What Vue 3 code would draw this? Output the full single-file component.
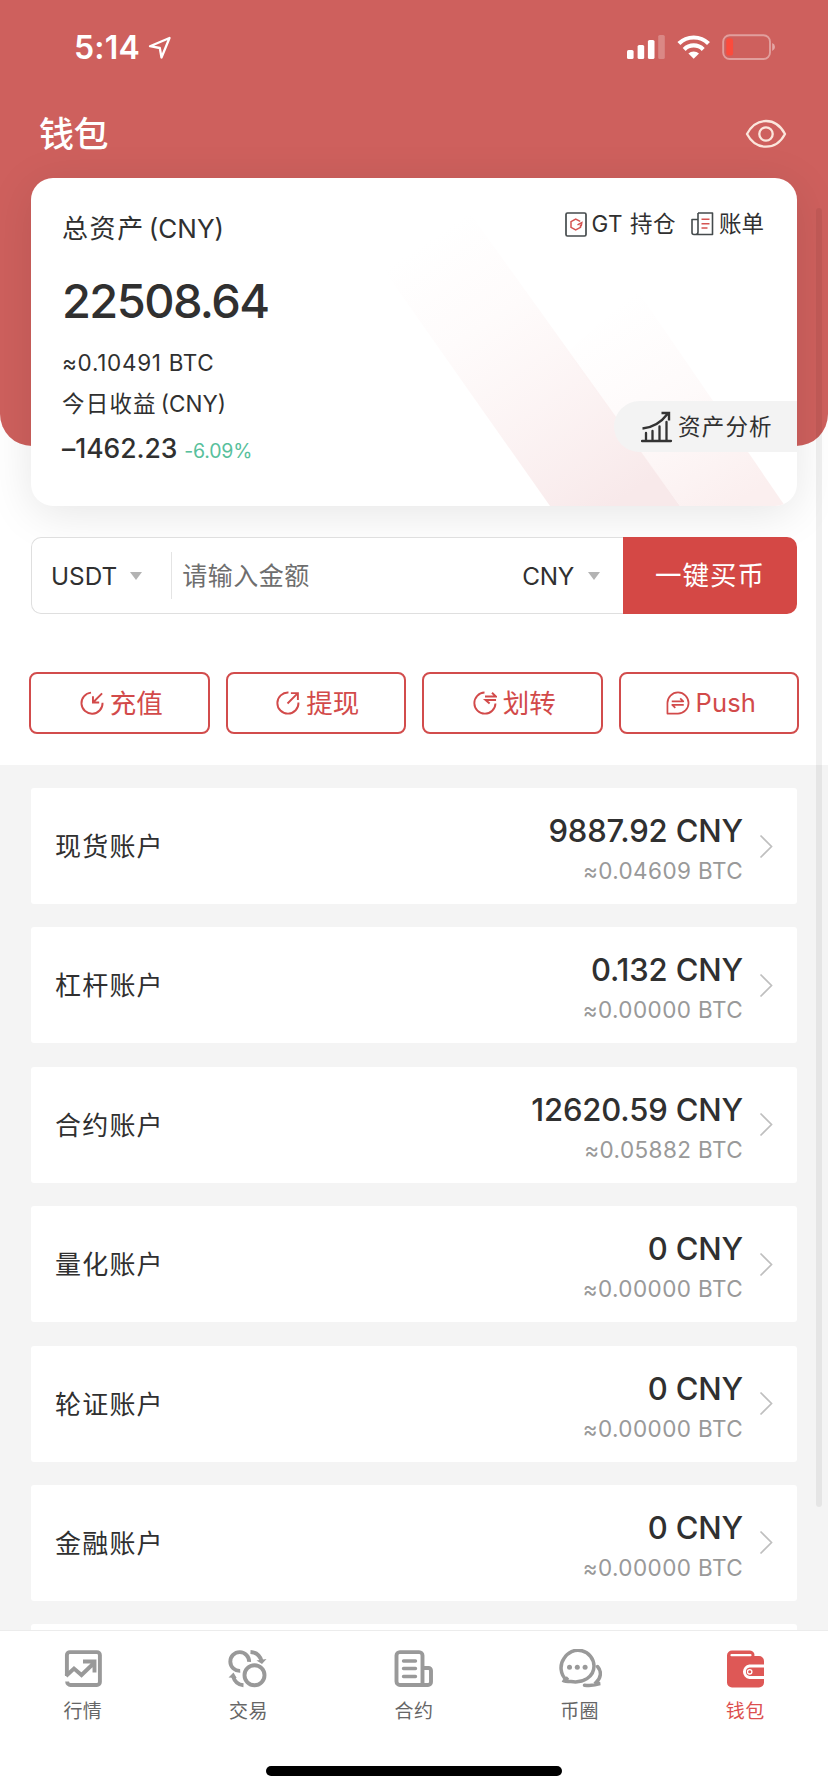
<script setup>
const accounts = [
  { name: '现货账户', amount: '9887.92 CNY', btc: '≈0.04609 BTC' },
  { name: '杠杆账户', amount: '0.132 CNY', btc: '≈0.00000 BTC' },
  { name: '合约账户', amount: '12620.59 CNY', btc: '≈0.05882 BTC' },
  { name: '量化账户', amount: '0 CNY', btc: '≈0.00000 BTC' },
  { name: '轮证账户', amount: '0 CNY', btc: '≈0.00000 BTC' },
  { name: '金融账户', amount: '0 CNY', btc: '≈0.00000 BTC' },
]
const actions = [
  { id: 'in', label: '充值' },
  { id: 'out', label: '提现' },
  { id: 'transfer', label: '划转' },
  { id: 'push', label: 'Push' },
]
const tabs = [
  { id: 'market', label: '行情' },
  { id: 'trade', label: '交易' },
  { id: 'contract', label: '合约' },
  { id: 'circle', label: '币圈' },
  { id: 'wallet', label: '钱包', active: true },
]
</script>

<template>
  <div class="screen">
    <div class="red-bg"></div>

    <header class="status">
      <span class="time">5:14</span>
      <svg class="loc" width="24" height="24" viewBox="0 0 24 24"><path d="M2 10.2 21.5 2 13.5 21.5 11.8 12Z" fill="none" stroke="#fff" stroke-width="2.3" stroke-linejoin="round" /></svg>
      <svg class="sys" width="150" height="28" viewBox="0 0 150 28">
        <g fill="#fff">
          <rect x="0" y="16" width="6.6" height="9" rx="1.6" />
          <rect x="10.6" y="11" width="6.6" height="14" rx="1.6" />
          <rect x="20.9" y="6" width="6.6" height="19" rx="1.6" />
          <rect x="31.2" y="1" width="6.6" height="24" rx="1.6" opacity=".25" />
          <path d="M66.7 24.8 61.4 19.6a7.6 7.6 0 0 1 10.6 0Z" />
        </g>
        <g fill="none" stroke="#fff" stroke-width="4.2">
          <path d="M51.9 9.6a21 21 0 0 1 29.6 0" />
          <path d="M57.2 15.4a13.4 13.4 0 0 1 19 0" />
        </g>
        <rect x="96.2" y="1.2" width="46.8" height="23.8" rx="6.5" fill="none" stroke="#fff" stroke-opacity=".4" stroke-width="1.9" />
        <path d="M145.2 9q2.8 1.2 2.8 4t-2.8 4Z" fill="#fff" fill-opacity=".45" />
        <rect x="99.3" y="4.3" width="6.8" height="17.2" rx="2.6" fill="#fc4b3c" />
      </svg>
    </header>

    <div class="title-row">
      <h1>钱包</h1>
      <svg width="42" height="30" viewBox="0 0 42 30" fill="none" stroke="#fbe6dc" stroke-width="2.3">
        <path d="M2 15C6.5 6.500 13 2 21 2s14.500 4.500 19 13c-4.500 8.500-11 12.700-19 12.700S6.500 23.500 2 15Z" stroke-linejoin="round" />
        <circle cx="21" cy="15" r="6.700" />
      </svg>
    </div>

    <section class="card">
      <svg class="stripes" width="766" height="328" viewBox="0 0 766 328">
        <defs>
          <linearGradient id="ga" gradientUnits="userSpaceOnUse" x1="400" y1="60" x2="580" y2="328"><stop offset="0" stop-color="#faecec" stop-opacity="0" /><stop offset=".3" stop-color="#fbeeee" stop-opacity=".22" /><stop offset="1" stop-color="#f8e9ea" /></linearGradient>
          <linearGradient id="gb" gradientUnits="userSpaceOnUse" x1="580" y1="130" x2="700" y2="328"><stop offset="0" stop-color="#fbeeee" stop-opacity="0" /><stop offset=".5" stop-color="#fbeeee" stop-opacity=".3" /><stop offset="1" stop-color="#fbefef" /></linearGradient>
        </defs>
        <path d="M348 85 428 20 649 328H519Z" fill="url(#ga)" />
        <path d="M536 174 606 112 754 328H649Z" fill="url(#gb)" />
      </svg>
      <div class="links">
        <span class="link">
          <svg width="22" height="25" viewBox="0 0 22 25" fill="none"><rect x="1" y="1" width="20" height="23" rx="1.500" stroke="#444a4c" stroke-width="1.700" /><path d="M15.200 9.400 10.700 7 6 9.700v5.600l4.700 2.700 4.800-2.700v-2.600M12.500 12.900l4.300-2.300-.6 3.600" stroke="#d55452" stroke-width="1.500" /></svg>
          <span class="gt">GT 持仓</span>
        </span>
        <span class="link">
          <svg width="23" height="24" viewBox="0 0 23 24" fill="none"><path d="M7 1h14.500v21.500H3a2 2 0 0 1-2-2V7.500h6M7 1v19a2.500 2.500 0 0 1-2.500 2.500" stroke="#444a4c" stroke-width="1.600" stroke-linejoin="round" /><path d="M10.500 7.300h8M10.500 11.700h8M10.500 16h6" stroke="#d55452" stroke-width="1.500" /></svg>
          <span class="bill">账单</span>
        </span>
      </div>
      <div class="total-label"><span class="cjk">总资产</span><span>(CNY)</span></div>
      <div class="total">22508.64</div>
      <div class="total-btc">≈0.10491 BTC</div>
      <div class="today-label"><span class="cjk">今日收益</span><span>(CNY)</span></div>
      <div class="today"><span class="today-num">–1462.23</span><span class="pct">-6.09%</span></div>
      <div class="analysis">
        <svg width="32" height="32" viewBox="0 0 32 32" fill="none" stroke="#333" stroke-width="2"><path d="M1 30h29M5 29.500V22M11.500 29.500V20M18.500 29.500v-14M25.500 29.500V11" stroke-width="2.300" stroke-linecap="round" /><path d="M1.500 17.500C12 16.500 20 11.500 26.500 3M20.500 2h7.500v7.500" stroke-width="2.400" /></svg>
        <span>资产分析</span>
      </div>
    </section>

    <section class="buy">
      <div class="field">
        <span class="usdt">USDT</span><i class="caret"></i>
        <i class="sep"></i>
        <span class="ph">请输入金额</span>
        <span class="cny">CNY</span><i class="caret"></i>
      </div>
      <div class="buy-btn">一键买币</div>
    </section>

    <section class="actions">
      <div v-for="a in actions" :key="a.id" class="action">
        <svg width="24" height="24" viewBox="0 0 25 25" fill="none" stroke="#d24a4a" stroke-width="2">
          <template v-if="a.id === 'in'"><path d="M11.500 1.700a11 11 0 1 0 12 10.500M23 2.500 13.500 12M13.500 5.500V12H20" /></template>
          <template v-else-if="a.id === 'out'"><path d="M13 1.600A11 11 0 1 0 23.400 12M12 13 22.500 2.500M15.500 2.200h7.300v7.300" /></template>
          <template v-else-if="a.id === 'transfer'"><path d="M12 1.600A11 11 0 1 0 23.400 13M12.500 5.800H24L19.800 1.800M24 9.300H13l4.300 3.700" /></template>
          <template v-else><path d="M1.500 23.500V12.500a11 11 0 1 1 11 11ZM6 10.800h12l-3.200-3M18.500 14.500h-12l3.200 3" stroke-width="1.800" stroke-linejoin="round" /></template>
        </svg>
        <span :class="{ latin: a.id === 'push' }">{{ a.label }}</span>
      </div>
    </section>

    <main class="list">
      <div v-for="r in accounts" :key="r.name" class="row">
        <span class="name">{{ r.name }}</span>
        <div class="vals">
          <div class="amount">{{ r.amount }}</div>
          <div class="btc">{{ r.btc }}</div>
        </div>
        <svg width="14" height="25" viewBox="0 0 14 25"><path d="M1.500 1.500 12.500 12.500 1.500 23.500" fill="none" stroke="#bfbfbf" stroke-width="1.700" /></svg>
      </div>
      <div class="row"></div>
    </main>

    <nav class="tabbar">
      <div v-for="t in tabs" :key="t.id" class="tab" :class="{ active: t.active }">
        <svg width="44" height="40" viewBox="0 0 44 40" fill="none" stroke="#999" stroke-width="3.900">
          <template v-if="t.id === 'market'">
            <path d="M5.900 27V6a3 3 0 0 1 3-2.900h27a3 3 0 0 1 3 2.900v27a3 3 0 0 1-3 3H9.500a3.600 3.600 0 0 1-3.400-3.500" />
            <path d="M5 27l8-7.500 7.500 6.500L33 14M22 12.500h11.500V23.500" />
          </template>
          <template v-else-if="t.id === 'trade'">
            <path d="M14.200 21.900A9.400 9.400 0 1 1 23.100 12.900" />
            <circle cx="28.500" cy="26.300" r="10" />
            <path d="M24.500 3c6 .3 9.500 3.500 11.300 9.500M17.500 36.200c-6-.3-9-4-10.500-9" />
            <path d="M30.500 11.500l10-1.500-4.500 5zM2.500 28.500l5-5 3.200 5.500z" fill="#999" stroke="none" />
          </template>
          <template v-else-if="t.id === 'contract'">
            <path d="M30.500 36V6.500a3.400 3.400 0 0 0-3.400-3.400H7.900a3.400 3.400 0 0 0-3.400 3.400v26A3.500 3.500 0 0 0 8 36h28a3 3 0 0 0 3-3V21.500a2.500 2.500 0 0 0-2.500-2.500h-6" />
            <path d="M11.500 12h12M11.500 19.500h12M11.500 27.500h12" stroke-width="3.400" stroke-linecap="round" />
          </template>
          <template v-else-if="t.id === 'circle'">
            <path d="M8.500 31C2 25.500 1.500 15.500 6 9.500A16 16 0 0 1 36 17C36 28 25 34.500 13 32.500 9.500 32.500 7 32.500 4.500 31.200M7 31.500l3-3" stroke-width="3.500" />
            <path d="M39.500 17.500c4.500 5 3.500 11.500-1.500 16 1.200 1.200 2.500 1 4 1.200-5 1.800-10 2-15.500 1.500" stroke-width="3.500" stroke-linecap="round" />
            <g fill="#999" stroke="none"><circle cx="11.500" cy="18.300" r="2.500" /><circle cx="19.300" cy="18.300" r="2.500" /><circle cx="27.100" cy="18.300" r="2.500" /></g>
          </template>
          <template v-else>
            <path d="M4 6.500a5 5 0 0 1 5-5h18a4.500 4.500 0 0 1 4.400 5.500H36a5 5 0 0 1 5 5v21.500a5 5 0 0 1-5 5H9a5 5 0 0 1-5-5Z" fill="#de5856" stroke="none" />
            <path d="M8.500 6.200h19" stroke="#fff" stroke-width="2.200" stroke-linecap="round" />
            <path d="M41 17H26.500a5.800 5.800 0 0 0 0 11.500H41" stroke="#fff" stroke-width="3" />
            <circle cx="26.700" cy="22.800" r="2.200" stroke="#fff" stroke-width="1.300" />
          </template>
        </svg>
        <span>{{ t.label }}</span>
      </div>
      <i class="home"></i>
    </nav>
    <i class="scrollbar"></i>
  </div>
</template>

<style>
body { margin: 0; }
</style>

<style scoped>
.screen {
  position: relative;
  width: 828px;
  height: 1792px;
  overflow: hidden;
  background: #fff;
  color: #303030;
  font-family: Inter, "Noto Sans CJK SC", sans-serif;
  display: flex;
  flex-direction: column;
  white-space: nowrap;
}
.screen > * { flex-shrink: 0; }
svg { display: block; flex: none; }
i { display: block; flex: none; }
.red-bg {
  position: absolute;
  left: 0;
  top: 0;
  width: 828px;
  height: 446px;
  border-radius: 0 0 32px 32px;
  background: #ce605d;
}
.status {
  position: relative;
  height: 95px;
  padding: 0 51px 0 74px;
  display: flex;
  align-items: center;
  box-sizing: border-box;
}
.time { color: #fff; font-size: 32px; font-weight: 600; line-height: 40px; letter-spacing: 0.2px; }
.loc { margin-left: 8px; }
.sys { margin-left: auto; }
.title-row {
  position: relative;
  height: 78px;
  margin-bottom: 5px;
  padding: 0 41px 0 39px;
  display: flex;
  align-items: center;
  justify-content: space-between;
}
h1 { margin: 0; color: #fff; font-size: 35px; line-height: 50px; font-weight: 500; letter-spacing: -0.5px; }
.card {
  position: relative;
  width: 766px;
  height: 328px;
  margin-left: 31px;
  padding: 32px 0 0 31px;
  box-sizing: border-box;
  border-radius: 22px;
  background: #fff;
  overflow: hidden;
  box-shadow: 0 8px 46px rgba(0, 0, 0, 0.1);
}
.stripes { position: absolute; left: 0; top: 0; }
.links { position: absolute; right: 33px; top: 30px; height: 32px; display: flex; gap: 15px; align-items: center; font-size: 22.500px; }
.link { display: flex; align-items: center; gap: 5px; line-height: 32px; }
.gt { letter-spacing: 0.500px; }
.total-label { position: relative; height: 38px; line-height: 38px; font-size: 26px; display: flex; gap: 4px; }
.total-label .cjk { letter-spacing: 1.600px; }
.total { position: relative; margin-top: 23px; height: 60px; line-height: 60px; font-size: 47px; font-weight: 500; letter-spacing: -1.600px; }
.total-btc { position: relative; margin-top: 17px; height: 30px; line-height: 30px; font-size: 22.500px; letter-spacing: 0.700px; }
.today-label { position: relative; margin-top: 10px; height: 32px; line-height: 32px; font-size: 22.500px; display: flex; gap: 4px; }
.today-label .cjk { letter-spacing: 1.200px; }
.today { position: relative; margin-top: 11px; height: 36px; line-height: 35px; display: flex; gap: 7px; }
.today-num { font-size: 26.500px; font-weight: 500; letter-spacing: -0.050px; }
.pct { font-size: 19.500px; line-height: 40px; letter-spacing: -0.200px; color: #58bf9c; }
.analysis {
  position: absolute;
  right: 0;
  top: 223px;
  width: 183px;
  height: 51px;
  padding-left: 27px;
  box-sizing: border-box;
  border-radius: 26px 0 0 26px;
  background: #f3f3f3;
  display: flex;
  align-items: center;
  gap: 5px;
  font-size: 22.500px;
  letter-spacing: 1.200px;
}
.analysis span { padding-bottom: 4px; }
.buy { position: relative; margin: 31px 31px 0; height: 77px; display: flex; }
.field {
  flex: 1;
  border: 1px solid #dfdfdf;
  border-right: 0;
  border-radius: 10px 0 0 10px;
  display: flex;
  align-items: center;
  padding: 0 23px 0 19px;
  font-size: 24.300px;
  background: #fff;
}
.caret { width: 0; height: 0; border: 6px solid transparent; border-top: 8px solid #b3b3b3; border-bottom: 0; }
.usdt + .caret { margin-left: 13px; }
.sep { width: 1px; height: 47px; background: #e4e4e4; margin: 0 10px 0 29px; }
.ph { color: #6e6e6e; font-size: 25px; letter-spacing: 0.500px; padding-bottom: 4px; }
.cny { margin-left: auto; margin-right: 14px; letter-spacing: -0.300px; }
.buy-btn {
  width: 174px;
  border-radius: 0 10px 10px 0;
  background: #d44845;
  color: #fff;
  text-align: center;
  line-height: 77px;
  font-size: 26.500px;
  letter-spacing: 1px;
}
.actions { margin: 58px 29px 0; height: 62px; display: grid; grid-template-columns: repeat(4, 1fr); gap: 16px; }
.action {
  border: 2px solid #d24c4c;
  border-radius: 8px;
  display: flex;
  align-items: center;
  justify-content: center;
  gap: 6px;
  padding-left: 4px;
  color: #d24a4a;
  font-size: 26.500px;
  line-height: 40px;
}
.action .latin { font-size: 25.500px; letter-spacing: 0.100px; }
.list {
  margin-top: 31px;
  height: 865px;
  padding: 23px 31px 0;
  box-sizing: border-box;
  overflow: hidden;
  background: #f4f4f4;
}
.row {
  height: 116px;
  margin-bottom: 23.400px;
  padding: 0 24px;
  box-sizing: border-box;
  border-radius: 3px;
  background: #fff;
  display: flex;
  align-items: center;
}
.name { font-size: 26px; letter-spacing: 1.200px; padding-bottom: 3px; }
.vals { margin-left: auto; margin-right: 16px; text-align: right; padding-top: 9px; }
.amount { font-size: 31px; font-weight: 500; line-height: 40px; letter-spacing: -0.150px; }
.btc { font-size: 22.500px; line-height: 39px; letter-spacing: 0.400px; color: #999; }
.tabbar {
  position: relative;
  flex: 1;
  border-top: 1px solid #ececec;
  background: #fff;
  display: grid;
  grid-template-columns: repeat(5, 1fr);
}
.tab { display: flex; flex-direction: column; align-items: center; padding-top: 18px; font-size: 19px; color: #666; line-height: 28px; letter-spacing: 0.400px; }
.tab svg { margin-bottom: 9px; }
.tab.active { color: #dc4f4f; }
.home { position: absolute; left: 266px; bottom: 16px; width: 296px; height: 10px; border-radius: 5px; background: #000; }
.scrollbar { position: absolute; left: 816px; top: 208px; width: 6px; height: 1299px; border-radius: 3px; background: rgba(0, 0, 0, 0.06); }
</style>
